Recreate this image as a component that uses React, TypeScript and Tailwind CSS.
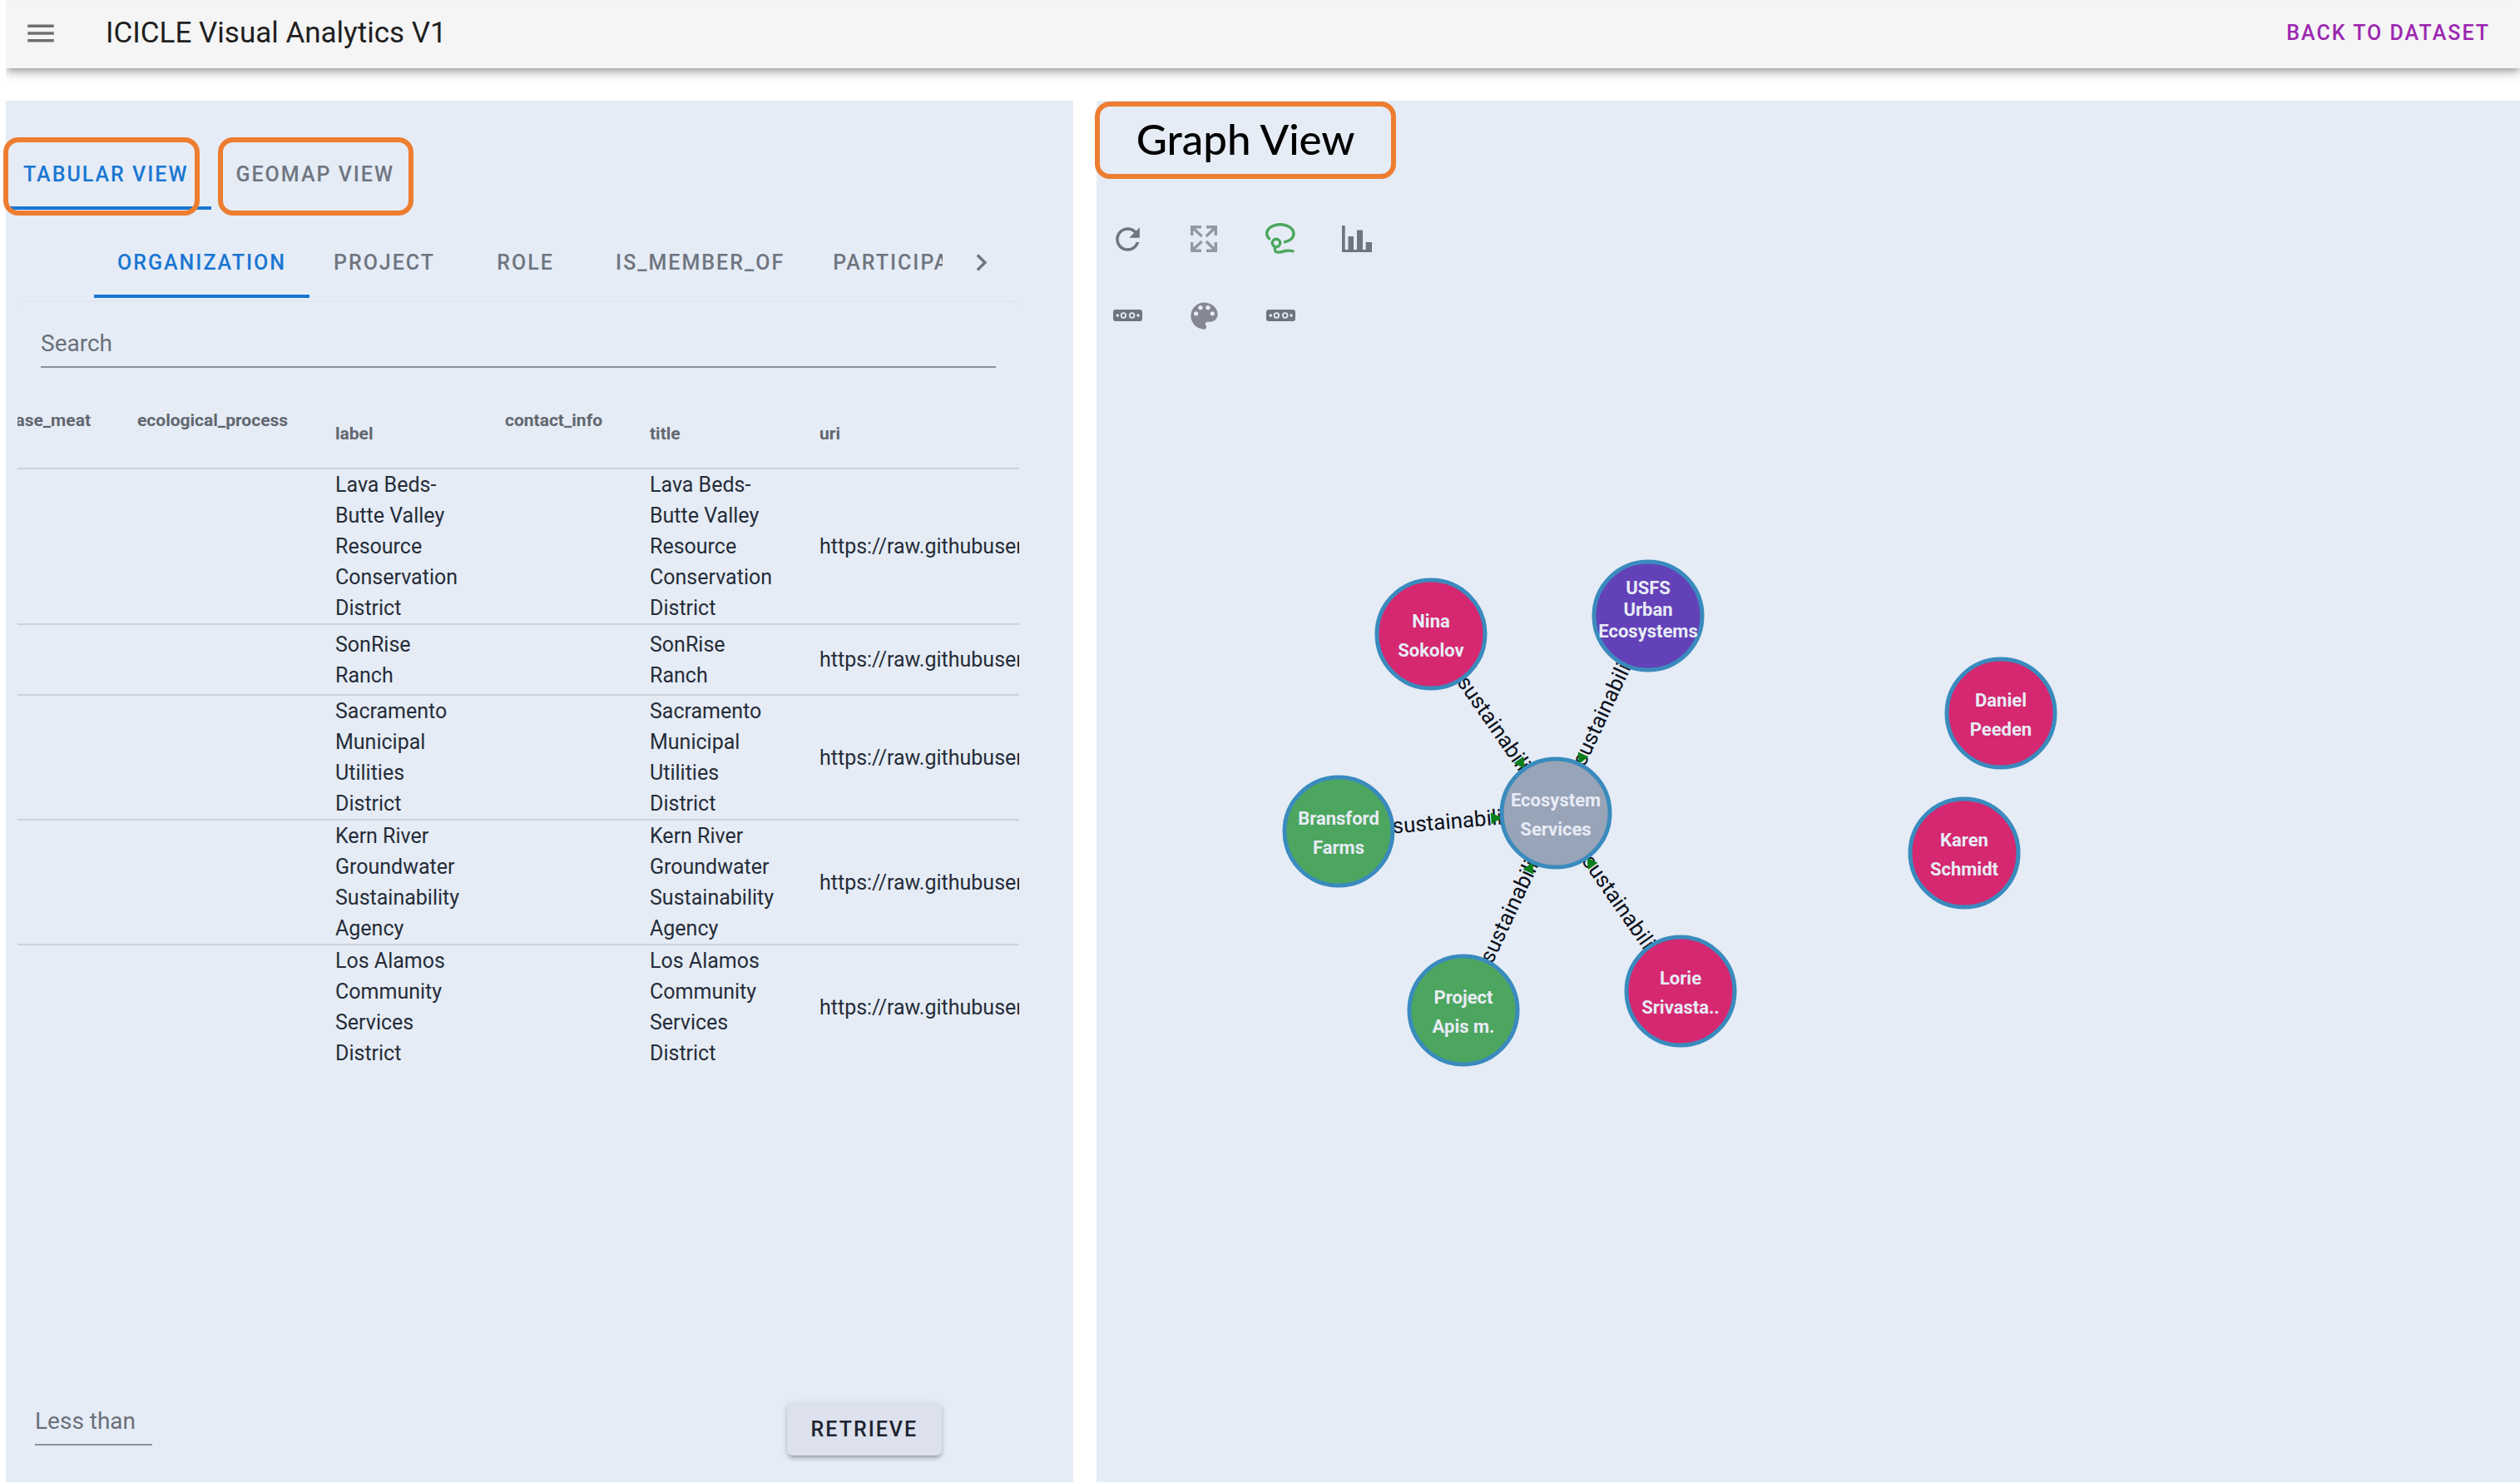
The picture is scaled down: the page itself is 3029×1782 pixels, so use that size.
import type { ReactNode } from "react";
import { MdChevronRight, MdMenu, MdRefresh } from "react-icons/md";
import { IoMdColorPalette } from "react-icons/io";

const entityTabs = ["ORGANIZATION", "PROJECT", "ROLE", "IS_MEMBER_OF", "PARTICIPATES_IN"];

const organizations = [
  "Lava Beds-Butte Valley Resource Conservation District",
  "SonRise Ranch",
  "Sacramento Municipal Utilities District",
  "Kern River Groundwater Sustainability Agency",
  "Los Alamos Community Services District",
];

type GraphNode = { id: string; x: number; y: number; fill: string; lines: string[] };

const hub: GraphNode = { id: "hub", x: 552, y: 576, fill: "#98a4b8", lines: ["Ecosystem", "Services"] };

const linked: GraphNode[] = [
  { id: "nina", x: 402, y: 361, fill: "#d52870", lines: ["Nina", "Sokolov"] },
  { id: "usfs", x: 663, y: 339, fill: "#6341b8", lines: ["USFS", "Urban", "Ecosystems"] },
  { id: "bransford", x: 291, y: 598, fill: "#4da65f", lines: ["Bransford", "Farms"] },
  { id: "apis", x: 441, y: 813, fill: "#4da65f", lines: ["Project", "Apis m."] },
  { id: "lorie", x: 702, y: 790, fill: "#d52870", lines: ["Lorie", "Srivasta.."] },
];

const isolated: GraphNode[] = [
  { id: "daniel", x: 1087, y: 456, fill: "#d52870", lines: ["Daniel", "Peeden"] },
  { id: "karen", x: 1043, y: 624, fill: "#d52870", lines: ["Karen", "Schmidt"] },
];

function Edge({ from }: { from: GraphNode }) {
  const towards = (Math.atan2(hub.y - from.y, hub.x - from.x) * 180) / Math.PI;
  const upright = towards > 90 ? towards - 180 : towards < -90 ? towards + 180 : towards;
  const mx = (from.x + hub.x) / 2;
  const my = (from.y + hub.y) / 2;
  return (
    <g>
      <text
        transform={`translate(${mx} ${my}) rotate(${upright})`}
        y={8}
        textAnchor="middle"
        className="fill-[#0b0f19] text-[26px]"
      >
        sustainabili
      </text>
      <polygon
        points="-78,-7 -65,0 -78,7"
        transform={`translate(${hub.x} ${hub.y}) rotate(${towards})`}
        fill="#0b7f1c"
      />
    </g>
  );
}

function Bubble({ node }: { node: GraphNode }) {
  const three = node.lines.length === 3;
  const first = three ? -26 : -8;
  const step = three ? 26 : 35;
  return (
    <g transform={`translate(${node.x} ${node.y})`}>
      <circle r={65} fill={node.fill} stroke="#3a8bbd" strokeWidth={5} />
      {node.lines.map((line, i) => (
        <text
          key={line}
          y={first + i * step}
          textAnchor="middle"
          className="fill-[#e8ecf6] text-[22px] font-bold"
        >
          {line}
        </text>
      ))}
    </g>
  );
}

function ExpandIcon() {
  return (
    <svg viewBox="0 0 32 32" className="size-8" fill="none" stroke="#9497a4" strokeWidth={3.4} aria-hidden="true">
      <path d="M1.7 12V1.7H13M1.7 1.7L13.6 13" />
      <path d="M30.3 12V1.7H19M30.3 1.7L18.8 13" />
      <path d="M1.7 20V30.3H13M1.7 30.3L13.6 19" />
      <path d="M30.3 20V30.3H19M30.3 30.3L18.8 19" />
    </svg>
  );
}

function LassoIcon() {
  return (
    <svg viewBox="0 0 36 38" className="h-[38px] w-9" fill="none" stroke="#4aa75d" strokeWidth={3.4} aria-hidden="true">
      <path d="M5.7 19.6C3 17.8 1.7 15.3 1.7 12.8C1.7 6.6 8.8 1.7 17.7 1.7S34 6.6 34 12.8C34 18 29 22 22 23.1" />
      <circle cx="13" cy="24" r="4.7" />
      <path d="M11.6 28.5C11.3 31 10.8 32.6 12.2 34.2C14.8 36.6 19.5 34.3 24 33.5C27.500 32.900 30.500 33 33 33.800" strokeLinecap="round" />
    </svg>
  );
}

function BarsIcon() {
  return (
    <svg viewBox="0 0 36 32" className="h-8 w-9" fill="#6e7480" aria-hidden="true">
      <path d="M0 0H3.7V29H7.5V13H14V29H18V5.6H25V29H28.7V20H36V32H0Z" />
    </svg>
  );
}

function SliderIcon() {
  return (
    <svg viewBox="0 0 35 14" className="h-3.5 w-[35px]" aria-hidden="true">
      <rect width="35" height="14" rx="3" fill="#6e7480" />
      <g fill="#e5ecf6">
        <circle cx="5.3" cy="7" r="1.8" />
        <circle cx="30" cy="7" r="1.8" />
      </g>
      <g fill="none" stroke="#e5ecf6" strokeWidth="1.8">
        <circle cx="12.4" cy="7" r="2.8" />
        <circle cx="22.7" cy="7" r="2.8" />
      </g>
    </svg>
  );
}

function Tool({ label, children }: { label: string; children: ReactNode }) {
  return (
    <button type="button" aria-label={label} className="flex size-11 items-center justify-center text-[#6e7480]">
      {children}
    </button>
  );
}

export default function App() {
  return (
    <div className="flex min-h-screen flex-col bg-white pt-px pb-px pl-[7px] font-['Roboto',sans-serif]">
      <div className="overflow-x-clip">
        <header className="flex h-[81px] items-center bg-[#f5f5f5] pr-9 pb-1 pl-[21px] shadow-[0_4px_7px_-2px_rgba(0,0,0,0.2),0_7px_9px_0_rgba(0,0,0,0.14),0_2px_18px_0_rgba(0,0,0,0.12)]">
          <button type="button" aria-label="Menu" className="text-[#6f6f6f]">
            <MdMenu className="size-[42px]" />
          </button>
          <h1 className="ml-[57px] flex-1 text-[35px] leading-[56px] text-[#1f1f1f]">ICICLE Visual Analytics V1</h1>
          <a href="#dataset" className="text-[25px] font-medium tracking-[2px] text-[#9c27b0]">
            BACK TO DATASET
          </a>
        </header>
      </div>

      <main className="mt-[39px] grid flex-1 grid-cols-[minmax(0,3fr)_minmax(0,4fr)] gap-7">
        <section className="flex flex-col bg-[#e5ecf6] pt-[46px] pb-8">
          <div role="tablist" aria-label="View" className="relative flex h-[85px] text-[25px] font-medium tracking-[2px]">
            <button type="button" role="tab" aria-selected="true" className="border-b-4 border-[#1976d2] pt-1 pr-[28px] pl-[21px] text-[#1976d2]">
              TABULAR VIEW
            </button>
            <button type="button" role="tab" aria-selected="false" className="px-[29px] text-[#6f7580]">
              GEOMAP VIEW
            </button>
            <span className="pointer-events-none absolute -top-0.5 -left-[3px] h-[94px] w-[236px] rounded-[18px] border-6 border-[#ed7d31]" />
            <span className="pointer-events-none absolute -top-0.5 left-[255px] h-[94px] w-[235px] rounded-[18px] border-6 border-[#ed7d31]" />
          </div>

          <div className="mt-[21px] mr-[65px] ml-[14px] flex h-[85px]">
            <div className="w-[92px] shrink-0" />
            <div role="tablist" aria-label="Entity" className="flex flex-1 overflow-hidden text-[25px] font-medium tracking-[2px]">
              {entityTabs.map((tab, i) => (
                <button
                  key={tab}
                  type="button"
                  role="tab"
                  aria-selected={i === 0}
                  className={
                    i === 0
                      ? "shrink-0 border-b-4 border-[#1976d2] px-[28px] pt-1 text-[#1976d2]"
                      : "min-w-[159px] shrink-0 px-[29px] text-[#6f7580]"
                  }
                >
                  {tab}
                </button>
              ))}
            </div>
            <button type="button" aria-label="Scroll tabs right" className="flex w-[92px] shrink-0 items-center justify-center text-[#6e7480]">
              <MdChevronRight className="size-[41px]" />
            </button>
          </div>

          <div className="mt-[3px] mr-[65px] ml-[14px] overflow-hidden rounded-t-lg border-t-2 border-[#e0e6f2]">
            <div className="px-7 pt-[22px]">
              <input
                type="text"
                aria-label="Search"
                placeholder="Search"
                className="h-[57px] w-full border-b-2 border-[#8b919c] bg-transparent text-[28px] placeholder:text-[#6b707a] placeholder:opacity-100"
              />
            </div>
            <table className="w-full table-fixed border-separate border-spacing-0 text-left text-[25px] leading-[37px] text-[#262c38]">
              <colgroup>
                <col className="w-[116px]" />
                <col className="w-[238px]" />
                <col className="w-[204px]" />
                <col className="w-[174px]" />
                <col className="w-[204px]" />
                <col />
              </colgroup>
              <thead>
                <tr className="h-[122px] align-top text-[21px] leading-8 text-[#62676f] [&>th]:border-b-2 [&>th]:border-[#cbd1dd] [&>th]:px-7 [&>th]:font-bold">
                  <th scope="col" className="pt-[47px]">
                    <div className="flex justify-end">increase_meat</div>
                  </th>
                  <th scope="col" className="pt-[47px]">ecological_process</th>
                  <th scope="col" className="pt-[63px]">label</th>
                  <th scope="col" className="pt-[47px]">contact_info</th>
                  <th scope="col" className="pt-[63px]">title</th>
                  <th scope="col" className="pt-[63px]">uri</th>
                </tr>
              </thead>
              <tbody>
                {organizations.map((name) => (
                  <tr
                    key={name}
                    className="h-[85px] [&>td]:border-b-2 [&>td]:border-[#cbd1dd] [&>td]:px-7 last:[&>td]:border-transparent"
                  >
                    <td />
                    <td />
                    <td>{name}</td>
                    <td />
                    <td>{name}</td>
                    <td className="whitespace-nowrap">https://raw.githubusercontent.com</td>
                  </tr>
                ))}
              </tbody>
            </table>
          </div>

          <div className="mt-auto flex items-end justify-between pr-[158px] pl-[35px]">
            <input
              type="text"
              aria-label="Less than"
              placeholder="Less than"
              className="mb-3 h-[57px] w-[141px] border-b-2 border-[#8b919c] bg-transparent text-[28px] placeholder:text-[#6b707a] placeholder:opacity-100"
            />
            <button
              type="button"
              className="h-16 rounded-[7px] bg-[#dce1ed] px-[29px] pt-0.5 text-[25px] font-medium tracking-[2px] text-[#1d2330] shadow-[0_5px_2px_-4px_rgba(0,0,0,0.2),0_4px_4px_0_rgba(0,0,0,0.14),0_2px_9px_0_rgba(0,0,0,0.12)]"
            >
              RETRIEVE
            </button>
          </div>
        </section>

        <section className="flex flex-col bg-[#e5ecf6]">
          <h2 className="mt-px -ml-0.5 flex h-[93px] w-[362px] items-center justify-center rounded-[18px] border-6 border-[#ed7d31] pb-1 font-['Lato',sans-serif] text-[51px] leading-none font-medium text-black">
            Graph View
          </h2>
          <div className="mt-[50px] flex flex-col gap-12 pl-[15px]">
            <div className="flex gap-12">
              <Tool label="Refresh">
                <MdRefresh className="size-[43px]" />
              </Tool>
              <Tool label="Full screen">
                <ExpandIcon />
              </Tool>
              <Tool label="Lasso">
                <LassoIcon />
              </Tool>
              <Tool label="Chart">
                <BarsIcon />
              </Tool>
            </div>
            <div className="flex gap-12">
              <Tool label="Node size">
                <SliderIcon />
              </Tool>
              <Tool label="Palette">
                <IoMdColorPalette className="size-[43px] text-[#868794]" />
              </Tool>
              <Tool label="Edge size">
                <SliderIcon />
              </Tool>
            </div>
          </div>
          <svg className="min-h-[900px] w-full flex-1" role="img" aria-label="Knowledge graph">
            {linked.map((n) => (
              <Edge key={n.id} from={n} />
            ))}
            {[hub, ...linked, ...isolated].map((n) => (
              <Bubble key={n.id} node={n} />
            ))}
          </svg>
        </section>
      </main>
    </div>
  );
}
